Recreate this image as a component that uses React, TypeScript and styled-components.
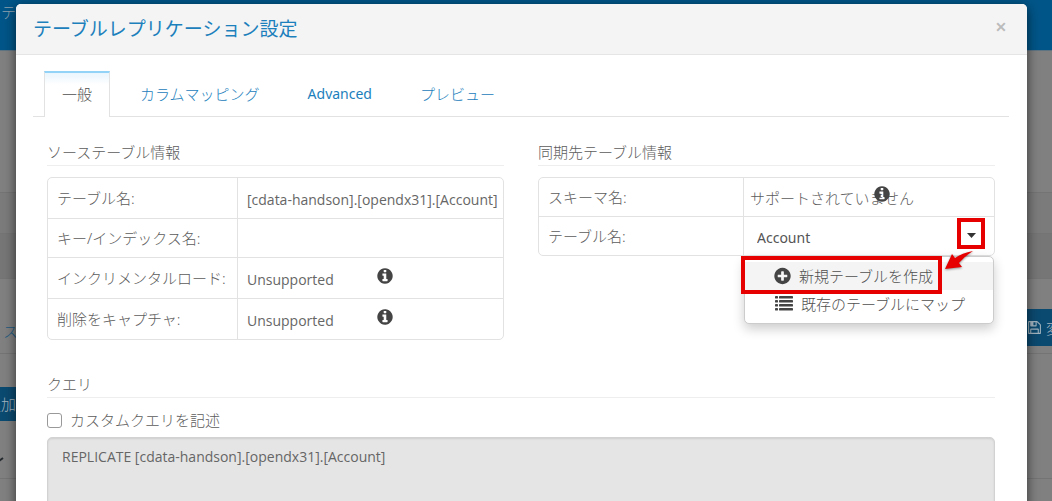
import React from "react";
import styled, { createGlobalStyle } from "styled-components";

const GlobalStyle = createGlobalStyle`
  * { box-sizing: border-box; }
  body {
    margin: 0;
    background: #808080;
    color: #5c5c5c;
    font: 15px/20px "Noto Sans", "Noto Sans CJK JP", sans-serif;
    font-weight: 300;
    overflow: hidden;
  }
  button, input, textarea { font: inherit; color: inherit; }
`;

/* ---- page behind the dialog ---- */

const Page = styled.div`
  position: relative;
  min-height: 100vh;
  overflow: hidden;
`;

const TopBar = styled.header`
  height: 51px;
  padding: 2px 0;
  background: #005588;
  border-bottom: 1px solid #5f7482;
  color: #8fa3b0;
  white-space: nowrap;
`;

const CutText = styled.span`
  display: block;
  margin-left: -14px;
`;

const Band = styled.div<{ $h: number; $bg: string }>`
  height: ${(p) => p.$h}px;
  background: ${(p) => p.$bg};
  border-bottom: 1px solid #747474;
`;

const PageRow = styled.div<{ $h: number; $pad: number }>`
  display: flex;
  justify-content: space-between;
  align-items: flex-start;
  height: ${(p) => p.$h}px;
  padding-top: ${(p) => p.$pad}px;
  border-bottom: 1px solid #747474;
`;

const PageLink = styled.a`
  margin: 12px 0 0 3px;
  color: #1c5a80;
  text-decoration: none;
`;

const PageButton = styled.button<{ $w: number; $h: number; $pad: number }>`
  display: flex;
  align-items: center;
  gap: 4px;
  width: ${(p) => p.$w}px;
  height: ${(p) => p.$h}px;
  padding: 0 0 0 ${(p) => p.$pad}px;
  border: 0;
  background: #0b4a70;
  color: #a3b4bf;
  white-space: nowrap;
  overflow: hidden;

  svg { flex: none; }
`;

const Check = styled.svg`
  display: block;
  margin-top: 36px;
`;

/* ---- dialog ---- */

const Backdrop = styled.div`
  position: absolute;
  inset: 0;
  padding: 4px 25px 0 16px;
`;

const Modal = styled.section`
  min-height: 100%;
  background: #fff;
  border-radius: 5px 5px 0 0;
  box-shadow: 0 3px 12px rgba(0, 0, 0, 0.6);
`;

const ModalHeader = styled.header`
  display: flex;
  justify-content: space-between;
  align-items: center;
  height: 51px;
  padding: 0 18px 0 17px;
  background: #f4f4f4;
  border-bottom: 1px solid #e5e5e5;
  border-radius: 5px 5px 0 0;
`;

const Title = styled.h1`
  margin: 0;
  color: #1c80bc;
  font-size: 19px;
  line-height: 28px;
  font-weight: 400;
`;

const Close = styled.button`
  width: 16px;
  margin-bottom: 4px;
  padding: 0;
  border: 0;
  background: none;
  color: #bbb;
  font-size: 20px;
  line-height: 20px;
  font-weight: 600;
`;

const Tabs = styled.nav`
  display: flex;
  gap: 12px;
  margin: 16px 18px 0 17px;
  padding-left: 11px;
  border-bottom: 1px solid #e2e2e2;
`;

const Tab = styled.button<{ $active?: boolean }>`
  height: 46px;
  margin-bottom: -1px;
  padding: 0 17px 3px;
  border: 1px solid ${(p) => (p.$active ? "#e2e2e2" : "transparent")};
  border-top: 2px solid ${(p) => (p.$active ? "#94d3f8" : "transparent")};
  border-bottom: 0;
  background: ${(p) => (p.$active ? "linear-gradient(#e9f5fd, #fff 12px)" : "none")};
  color: ${(p) => (p.$active ? "#505050" : "#1c80bc")};
`;

const Latin = styled.span`
  font-size: 14px;
  font-weight: 400;
`;

const Content = styled.div`
  padding: 25px 32px 0 31px;
`;

const Columns = styled.div`
  display: grid;
  grid-template-columns: 1fr 1fr;
  gap: 34px;
  align-items: start;
`;

const SectionTitle = styled.h2`
  margin: 0 0 11px;
  padding-bottom: 3px;
  border-bottom: 1px solid #eee;
  font-size: 15px;
  line-height: 20px;
  font-weight: 300;
`;

const Table = styled.table<{ $label: number }>`
  width: 100%;
  table-layout: fixed;
  border: 1px solid #e2e2e2;
  border-radius: 5px;
  border-collapse: separate;
  border-spacing: 0;

  th, td {
    padding: 0 0 0 9px;
    font-weight: 300;
    text-align: left;
    white-space: nowrap;
  }
  th { width: ${(p) => p.$label}px; }
  td { border-left: 1px solid #e2e2e2; }
  tr + tr > * { border-top: 1px solid #e2e2e2; }
`;

const Row = styled.tr<{ $h: number }>`
  height: ${(p) => p.$h}px;
`;

const Value = styled.div`
  display: flex;
  align-items: center;
  padding-top: 3px;
  font-family: "Open Sans", sans-serif;
  font-size: 14px;
  font-weight: 400;
  color: #666;
`;

const Status = styled.span`
  width: 129px;
`;

const InfoIcon = styled.svg`
  width: 18px;
  height: 18px;
  margin-top: -8px;
  fill: #444;
`;

const Overlapped = styled.div`
  position: relative;
  margin-left: -3px;
  padding-top: 2px;

  svg {
    position: absolute;
    left: 123px;
    top: 7px;
  }
`;

const Combo = styled.div`
  position: relative;
  display: flex;
  align-items: center;
  margin-left: -9px;
`;

const ComboInput = styled.input`
  flex: 1;
  min-width: 0;
  height: 30px;
  padding: 3px 0 0 13px;
  border: 0;
  background: none;
  color: #555;
  font-size: 14px;
  font-weight: 400;
`;

const Toggle = styled.button`
  display: flex;
  align-items: center;
  justify-content: center;
  width: 28px;
  height: 31px;
  margin-right: 9px;
  margin-top: -6px;
  border: 4px solid #e60000;
  background: #fff;
  padding: 4px 0 0;
`;

const Menu = styled.ul`
  position: absolute;
  z-index: 2;
  top: 35px;
  left: 0;
  right: 0;
  margin: 0;
  padding: 5px 0;
  list-style: none;
  background: #fff;
  border: 1px solid #ccc;
  border-radius: 5px;
  box-shadow: 0 5px 12px rgba(0, 0, 0, 0.2);
`;

const MenuItem = styled.button<{ $active?: boolean }>`
  display: flex;
  align-items: center;
  gap: 8px;
  width: 100%;
  height: 28px;
  padding: 0 0 1px 29px;
  border: 0;
  background: ${(p) => (p.$active ? "#f4f4f4" : "#fff")};
  color: #505050;

  svg { fill: #444; }
`;

const Highlight = styled.span`
  position: absolute;
  top: -1px;
  left: -4px;
  width: 201px;
  height: 38px;
  border: 4px solid #e60000;
  pointer-events: none;
`;

const Arrow = styled.svg`
  position: absolute;
  top: -8px;
  left: 198px;
  filter: drop-shadow(0 1px 1px rgba(0, 0, 0, 0.4));
`;

const Query = styled.div`
  margin-top: 34px;
`;

const CheckLabel = styled.label`
  display: flex;
  align-items: center;
  gap: 8px;
  margin-top: 12px;
  margin-bottom: 7px;
`;

const Checkbox = styled.input`
  appearance: none;
  width: 15px;
  height: 15px;
  margin: 1px 0 0;
  border: 1px solid #999;
  border-radius: 3px;
  background: #fff;
`;

const QueryText = styled.textarea`
  display: block;
  width: 100%;
  height: 100px;
  padding: 9px 14px;
  border: 1px solid #d2d2d2;
  border-radius: 5px;
  background: #e5e5e5;
  box-shadow: inset 0 1px 2px rgba(0, 0, 0, 0.1);
  color: #666;
  font-family: "Open Sans", sans-serif;
  font-size: 14px;
  font-weight: 400;
  resize: none;
`;

const DISC =
  "M1664 896q0 209-103 385.5t-279.5 279.5-385.5 103-385.5-103-279.5-279.5-103-385.5 103-385.5 279.5-279.5 385.5-103 385.5 103 279.5 279.5 103 385.5z";

const Info = () => (
  <InfoIcon viewBox="0 0 1792 1792" role="img" aria-label="info">
    <path
      fillRule="evenodd"
      d={`M1152 1376v-160q0-14-9-23t-23-9h-96v-512q0-14-9-23t-23-9h-320q-14 0-23 9t-9 23v160q0 14 9 23t23 9h96v320h-96q-14 0-23 9t-9 23v160q0 14 9 23t23 9h448q14 0 23-9t9-23zm-128-896v-160q0-14-9-23t-23-9h-192q-14 0-23 9t-9 23v160q0 14 9 23t23 9h192q14 0 23-9t9-23z${DISC}`}
    />
  </InfoIcon>
);

const Plus = () => (
  <svg width="17" height="18" viewBox="100 100 1592 1592" aria-hidden="true">
    <path
      fillRule="evenodd"
      d={`M1344 960v-128q0-26-19-45t-45-19h-256v-256q0-26-19-45t-45-19h-128q-26 0-45 19t-19 45v256h-256q-26 0-45 19t-19 45v128q0 26 19 45t45 19h256v256q0 26 19 45t45 19h128q26 0 45-19t19-45v-256h256q26 0 45-19t19-45z${DISC}`}
    />
  </svg>
);

const List = () => (
  <svg width="19" height="18" viewBox="0 0 19 18" aria-hidden="true">
    {[1, 5, 9, 13].map((y) => (
      <g key={y}>
        <rect x="1" y={y} width="3" height="2.4" rx="0.4" />
        <rect x="5" y={y} width="14" height="2.4" rx="0.4" />
      </g>
    ))}
  </svg>
);

const Floppy = () => (
  <svg width="15" height="15" viewBox="0 0 1792 1792" fill="currentColor" aria-hidden="true">
    <path d="M512 1536h768v-384h-768v384zm896 0h128v-896q0-14-10-38.5t-20-34.5l-281-281q-10-10-34-20t-39-10v416q0 40-28 68t-68 28h-576q-40 0-68-28t-28-68v-416h-128v1280h128v-416q0-40 28-68t68-28h832q40 0 68 28t28 68v416zm-384-928v-320q0-13-9.5-22.5t-22.5-9.5h-192q-13 0-22.5 9.5t-9.5 22.5v320q0 13 9.5 22.5t22.5 9.5h192q13 0 22.5-9.5t9.5-22.5zm640 32v928q0 40-28 68t-68 28h-1344q-40 0-68-28t-28-68v-1344q0-40 28-68t68-28h928q40 0 88 20t76 48l280 280q28 28 48 76t20 88z" />
  </svg>
);

export default function App() {
  return (
    <>
      <GlobalStyle />
      <Page>
        <TopBar>
          <CutText>ステ</CutText>
        </TopBar>
        <Band $h={142} $bg="#808080" />
        <Band $h={41} $bg="#7b7b7b" />
        <Band $h={45} $bg="#767676" />
        <PageRow $h={75} $pad={30}>
          <PageLink href="#source">ス</PageLink>
          <PageButton $w={34} $h={37} $pad={9}>
            <Floppy />変
          </PageButton>
        </PageRow>
        <PageRow $h={125} $pad={33}>
          <div>
            <PageButton $w={30} $h={34} $pad={0}>
              <CutText>追加</CutText>
            </PageButton>
            <Check width="5" height="6" viewBox="0 0 5 6" aria-hidden="true">
              <path d="M-4 1L-1 4L3 1" fill="none" stroke="#252b30" strokeWidth="2" />
            </Check>
          </div>
        </PageRow>

        <Backdrop>
          <Modal role="dialog" aria-labelledby="dialog-title">
            <ModalHeader>
              <Title id="dialog-title">テーブルレプリケーション設定</Title>
              <Close aria-label="閉じる">×</Close>
            </ModalHeader>
            <Tabs>
              <Tab $active>一般</Tab>
              <Tab>カラムマッピング</Tab>
              <Tab>
                <Latin>Advanced</Latin>
              </Tab>
              <Tab>プレビュー</Tab>
            </Tabs>
            <Content>
              <Columns>
                <section>
                  <SectionTitle>ソーステーブル情報</SectionTitle>
                  <Table $label={189}>
                    <tbody>
                      <Row $h={40}>
                        <th scope="row">テーブル名:</th>
                        <td>
                          <Value>[cdata-handson].[opendx31].[Account]</Value>
                        </td>
                      </Row>
                      <Row $h={39}>
                        <th scope="row">キー/インデックス名:</th>
                        <td />
                      </Row>
                      <Row $h={41}>
                        <th scope="row">インクリメンタルロード:</th>
                        <td>
                          <Value>
                            <Status>Unsupported</Status>
                            <Info />
                          </Value>
                        </td>
                      </Row>
                      <Row $h={41}>
                        <th scope="row">削除をキャプチャ:</th>
                        <td>
                          <Value>
                            <Status>Unsupported</Status>
                            <Info />
                          </Value>
                        </td>
                      </Row>
                    </tbody>
                  </Table>
                </section>
                <section>
                  <SectionTitle>同期先テーブル情報</SectionTitle>
                  <Table $label={204}>
                    <tbody>
                      <Row $h={38}>
                        <th scope="row">スキーマ名:</th>
                        <td>
                          <Overlapped>
                            サポートされていません
                            <Info />
                          </Overlapped>
                        </td>
                      </Row>
                      <Row $h={39}>
                        <th scope="row">
                          <label htmlFor="table-name">テーブル名:</label>
                        </th>
                        <td>
                          <Combo>
                            <ComboInput id="table-name" defaultValue="Account" />
                            <Toggle aria-label="メニューを開く">
                              <svg width="9" height="5" viewBox="0 0 9 5">
                                <path d="M0 0H9L4.500 5Z" fill="#333" />
                              </svg>
                            </Toggle>
                            <Menu>
                              <li>
                                <MenuItem $active>
                                  <Plus />
                                  新規テーブルを作成
                                </MenuItem>
                                <Highlight />
                                <Arrow width="32" height="26" viewBox="0 0 32 26" aria-hidden="true">
                                  <path
                                    d="M30 2Q19 4 12 9L9 5L2 20L19 18L16 14Q22 7 30 2Z"
                                    fill="#e60000"
                                  />
                                </Arrow>
                              </li>
                              <li>
                                <MenuItem>
                                  <List />
                                  既存のテーブルにマップ
                                </MenuItem>
                              </li>
                            </Menu>
                          </Combo>
                        </td>
                      </Row>
                    </tbody>
                  </Table>
                </section>
              </Columns>
              <Query>
                <SectionTitle>クエリ</SectionTitle>
                <CheckLabel>
                  <Checkbox type="checkbox" />
                  カスタムクエリを記述
                </CheckLabel>
                <QueryText
                  readOnly
                  aria-label="クエリ"
                  defaultValue="REPLICATE [cdata-handson].[opendx31].[Account]"
                />
              </Query>
            </Content>
          </Modal>
        </Backdrop>
      </Page>
    </>
  );
}
